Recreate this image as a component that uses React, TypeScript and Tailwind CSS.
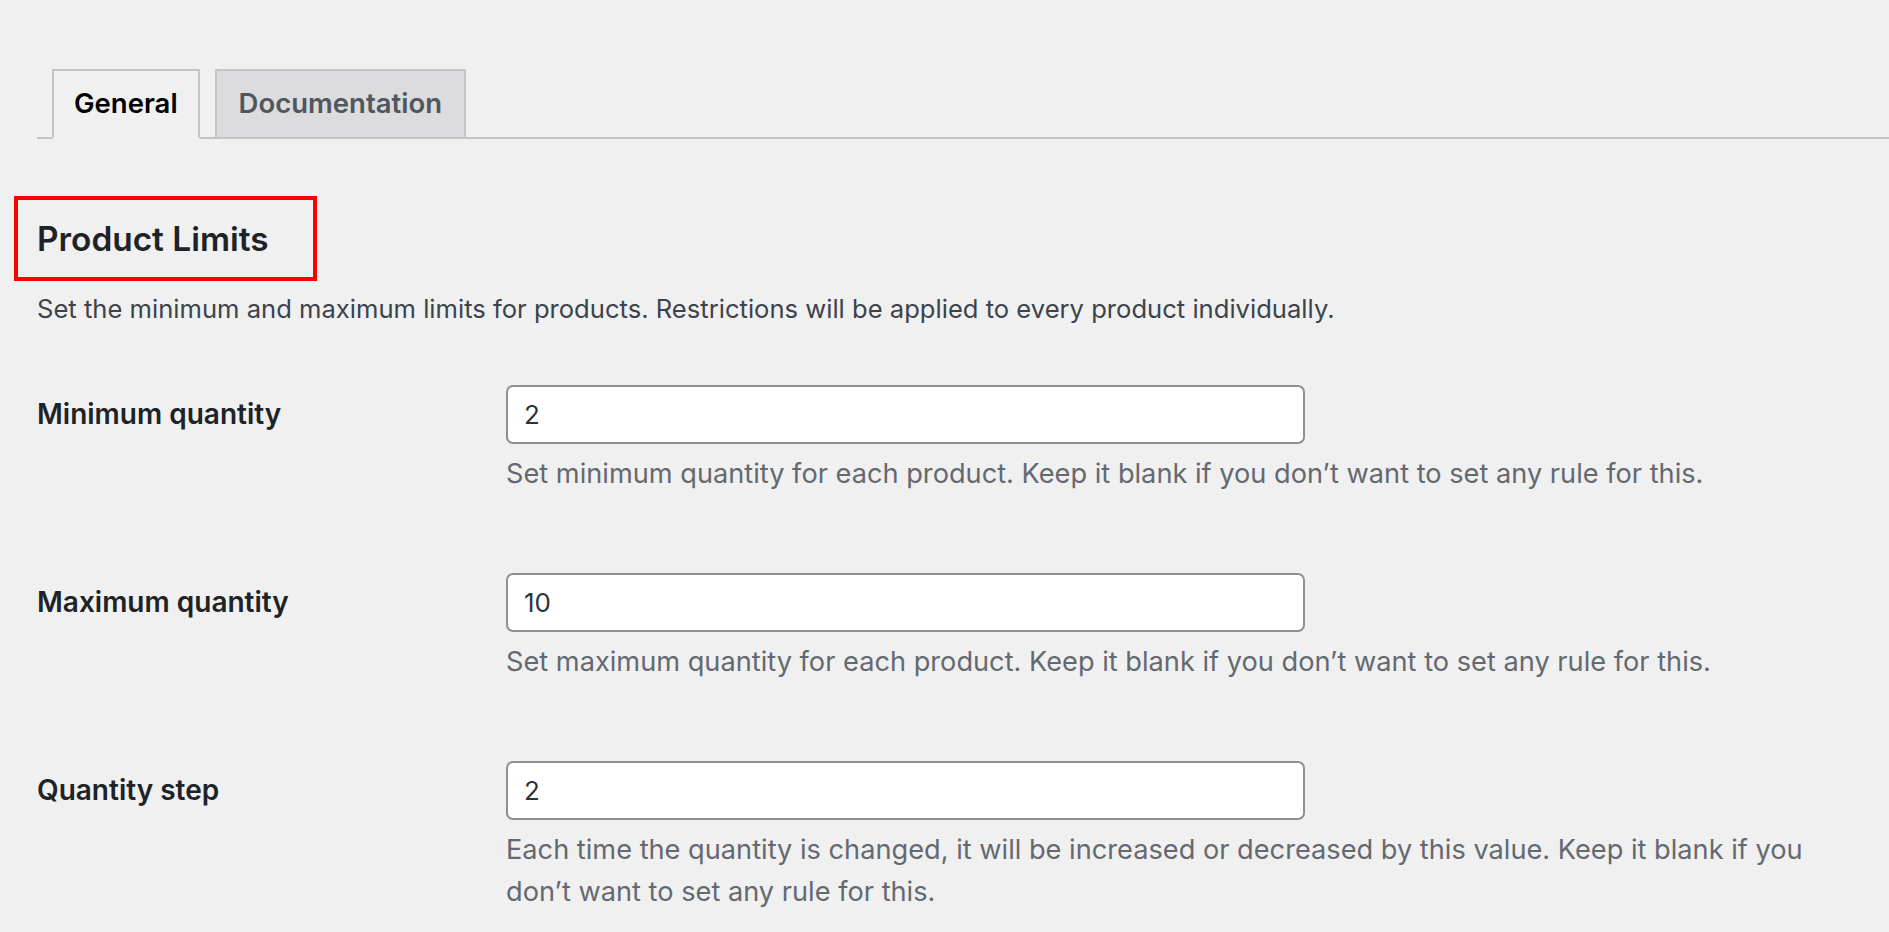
import { useState } from "react";

const rows = [
  {
    label: "Minimum quantity",
    value: "2",
    help: "Set minimum quantity for each product. Keep it blank if you don’t want to set any rule for this.",
  },
  {
    label: "Maximum quantity",
    value: "10",
    help: "Set maximum quantity for each product. Keep it blank if you don’t want to set any rule for this.",
  },
  {
    label: "Quantity step",
    value: "2",
    help: "Each time the quantity is changed, it will be increased or decreased by this value. Keep it blank if you don’t want to set any rule for this.",
  },
];

export default function App() {
  const [tab, setTab] = useState("general");

  return (
    <div className="min-h-screen bg-[#f0f0f1] font-['Inter','Liberation_Sans',sans-serif] text-[#1d2327]">
      {/* TABS */}
      <div className="pt-[69px] pl-[37px]">
        <nav className="flex gap-[15px] border-b-2 border-[#c3c4c7] pl-[15px]">
          <button
            onClick={() => setTab("general")}
            className={`-mb-[2px] h-[70px] border-2 px-[20px] text-[27.5px] font-semibold ${
              tab === "general"
                ? "border-[#c3c4c7] border-b-[#f0f0f1] bg-[#f0f0f1] text-black"
                : "border-[#c3c4c7] bg-[#dcdcde] text-[#50575e]"
            }`}
          >
            General
          </button>
          <button
            onClick={() => setTab("docs")}
            className={`-mb-[2px] h-[70px] border-2 px-[22px] text-[27.5px] font-semibold ${
              tab === "docs"
                ? "border-[#c3c4c7] border-b-[#f0f0f1] bg-[#f0f0f1] text-black"
                : "border-[#c3c4c7] bg-[#dcdcde] text-[#50575e]"
            }`}
          >
            Documentation
          </button>
        </nav>

        {/* SECTION HEADING */}
        <h2 className="relative mt-[80px] text-[33.4px] font-semibold leading-[40px] text-[#1d2327]">
          <span className="absolute -left-[23px] -top-[23px] h-[85px] w-[303px] border-4 border-[#f00]"></span>
          Product Limits
        </h2>
        <p className="mt-[31px] text-[25.6px] leading-[38px] text-[#3c434a]">
          Set the minimum and maximum limits for products. Restrictions will be applied to every product individually.
        </p>

        {/* FORM TABLE */}
        <div className="mt-[57px] flex flex-col gap-[78px]">
          {rows.map((r) => (
            <div key={r.label} className="grid grid-cols-[469px_1fr] pr-[60px]">
              <label className="pt-[11px] text-[28px] font-semibold leading-[36px] text-[#1d2327]">{r.label}</label>
              <div>
                <input
                  defaultValue={r.value}
                  className="h-[59px] w-[799px] rounded-[7px] border-2 border-[#8c8f94] bg-white px-[16px] text-[26px] text-[#2c3338] outline-none"
                />
                <p className="mt-[9px] max-w-[1340px] text-[27.2px] leading-[42px] text-[#646970]">{r.help}</p>
              </div>
            </div>
          ))}
        </div>
      </div>
    </div>
  );
}
